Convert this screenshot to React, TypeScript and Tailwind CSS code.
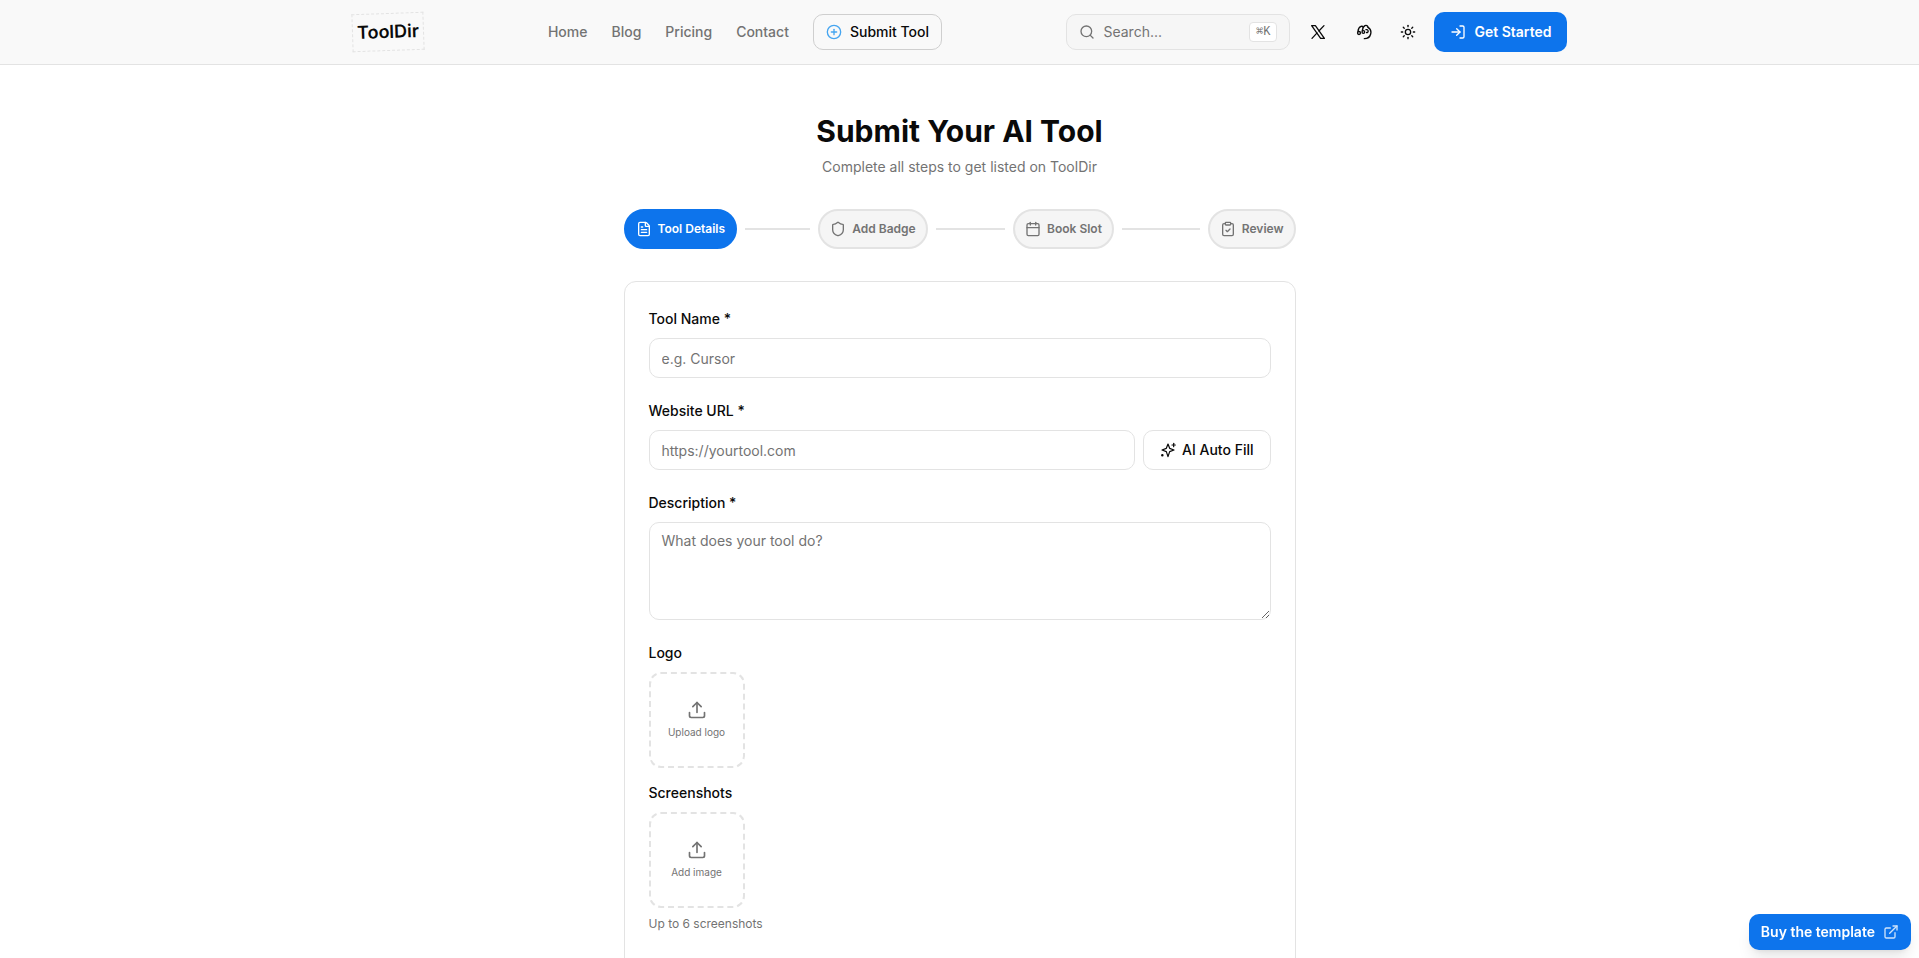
import type { ReactNode } from "react";
import {
  Calendar,
  CirclePlus,
  ClipboardCheck,
  ExternalLink,
  FileText,
  LogIn,
  Search,
  Shield,
  Sun,
  Upload,
} from "lucide-react";
import type { LucideIcon } from "lucide-react";

type Step = {
  label: string;
  icon: LucideIcon;
};

const navLinks = ["Home", "Blog", "Pricing", "Contact"];

const steps: Step[] = [
  { label: "Tool Details", icon: FileText },
  { label: "Add Badge", icon: Shield },
  { label: "Book Slot", icon: Calendar },
  { label: "Review", icon: ClipboardCheck },
];

const inputClass =
  "h-10 w-full min-w-0 rounded-[10px] border border-[#e3e3e3] bg-white px-3 py-1 text-sm text-[#0a0a0a] placeholder:text-[#737373]";

function XIcon() {
  return (
    <svg
      viewBox="0 0 24 24"
      className="size-[18px]"
      fill="none"
      stroke="currentColor"
      strokeWidth="1.7"
      strokeLinecap="round"
      strokeLinejoin="round"
      aria-hidden="true"
    >
      <path d="M3.5 3.5l12 17h5l-12-17z" />
      <path d="M4 20.500l6.800-7.300m2.400-2.500L20 3.500" />
    </svg>
  );
}

function PawIcon() {
  return (
    <svg
      viewBox="0 0 24 24"
      className="size-4"
      fill="none"
      stroke="currentColor"
      strokeWidth="2"
      strokeLinecap="round"
      strokeLinejoin="round"
      aria-hidden="true"
    >
      <circle cx="4.500" cy="13.500" r="2.200" />
      <circle cx="11" cy="12" r="2" />
      <path d="M3 11c.3-3.500 2-6.500 4.500-7.500 1.500-.5 2.500 0 3 1.200" />
      <path d="M9.500 10c.5-3.500 1.800-6.600 4-7.600 2-.8 4 .1 4.500 2.300" />
      <path d="M15 8.500c1.500-.5 3 .3 3.200 2 .1 1.500-1 2.500-2.400 2.300" />
      <path d="M18 5c3.500 2 5 6 4 10-1 4-4.500 7-9.500 7" />
    </svg>
  );
}

function SparklesIcon() {
  return (
    <svg
      viewBox="0 0 24 24"
      className="size-4"
      fill="none"
      stroke="currentColor"
      strokeWidth="1.8"
      strokeLinecap="round"
      strokeLinejoin="round"
      aria-hidden="true"
    >
      <path d="M12 3l2.500 6.500L21 12l-6.500 2.500L12 22l-2.500-7.500L3 12l6.500-2.500z" />
      <path d="M20.500 2v5" />
      <path d="M23 4.500h-5" />
      <circle cx="3.500" cy="20" r="1" fill="currentColor" />
    </svg>
  );
}

function Header() {
  return (
    <header className="border-b border-[#e3e3e3] bg-[#f9f9f9]">
      <div className="mx-auto flex h-16 max-w-7xl items-center justify-between px-8">
        <a
          href="#"
          className="-rotate-2 border border-dashed border-[#e3e3e3] px-1 py-1 text-lg font-semibold text-[#0a0a0a]"
        >
          ToolDir
        </a>

        <nav className="flex items-center gap-6 text-sm font-medium text-[#737373]">
          {navLinks.map((link) => (
            <a key={link} href="#">
              {link}
            </a>
          ))}
          <a
            href="#"
            className="flex h-9 items-center gap-2 rounded-[10px] border border-[#cfcfcf] px-3 text-[#0a0a0a]"
          >
            <CirclePlus className="size-4 text-[#45a5f0]" />
            Submit Tool
          </a>
        </nav>

        <div className="flex items-center gap-2">
          <button
            type="button"
            className="flex h-9 w-56 items-center gap-2 rounded-[10px] border border-[#e3e3e3] bg-[#f6f6f6] px-3 text-sm text-[#737373]"
          >
            <Search className="size-4" />
            Search...
            <kbd className="ml-auto flex h-5 items-center rounded border border-[#e3e3e3] bg-white px-1.5 font-mono text-xs">
              ⌘K
            </kbd>
          </button>
          <a href="#" aria-label="X" className="flex size-10 items-center justify-center text-[#0a0a0a]">
            <XIcon />
          </a>
          <a href="#" aria-label="Community" className="flex size-9 items-center justify-center text-[#0a0a0a]">
            <PawIcon />
          </a>
          <button
            type="button"
            aria-label="Toggle theme"
            className="flex size-9 items-center justify-center text-[#0a0a0a]"
          >
            <Sun className="size-4" />
          </button>
          <button
            type="button"
            className="flex h-10 items-center gap-2 rounded-[10px] bg-[#0d74ec] px-4 text-sm font-semibold text-white"
          >
            <LogIn className="size-4" />
            Get Started
          </button>
        </div>
      </div>
    </header>
  );
}

function Stepper({ current }: { current: number }) {
  return (
    <ol className="mt-8 flex items-center">
      {steps.map(({ label, icon: Icon }, index) => {
        const isLast = index === steps.length - 1;

        return (
          <li key={label} className={isLast ? "flex items-center" : "flex flex-1 items-center"}>
            <button
              type="button"
              className={
                index === current
                  ? "flex h-10 items-center gap-1.5 rounded-full border-2 border-[#0d74ec] bg-[#0d74ec] px-2.5 text-xs font-semibold text-white"
                  : "flex h-10 items-center gap-1.5 rounded-full border-2 border-[#e3e3e3] bg-[#f5f5f5] px-2.5 text-xs font-semibold text-[#737373]"
              }
            >
              <Icon className="size-4" />
              {label}
            </button>
            {!isLast && <span className="mx-2 h-0.5 flex-1 bg-[#e3e3e3]" />}
          </li>
        );
      })}
    </ol>
  );
}

function Field({ id, label, children }: { id: string; label: string; children: ReactNode }) {
  return (
    <div className="flex flex-col gap-2">
      <div className="h-6">
        <label htmlFor={id} className="text-sm font-medium text-[#0a0a0a]">
          {label}
        </label>
      </div>
      {children}
    </div>
  );
}

function UploadBox({ id, text }: { id: string; text: string }) {
  return (
    <button
      id={id}
      type="button"
      className="flex size-24 flex-col items-center justify-center gap-1 rounded-xl border-2 border-dashed border-[#e3e3e3] text-[10px]/4 text-[#737373]"
    >
      <Upload className="size-5" />
      {text}
    </button>
  );
}

export default function App() {
  return (
    <div className="min-h-screen bg-white font-[Inter,sans-serif]">
      <Header />

      <main className="mx-auto max-w-2xl py-12">
        <div className="text-center">
          <h1 className="text-3xl font-bold text-[#0a0a0a]">Submit Your AI Tool</h1>
          <p className="mt-2 text-sm text-[#737373]">
            Complete all steps to get listed on ToolDir
          </p>
        </div>

        <Stepper current={0} />

        <form className="mt-8 flex flex-col gap-5 rounded-xl border border-[#e3e3e3] p-6 pb-16">
          <Field id="name" label="Tool Name *">
            <input id="name" type="text" placeholder="e.g. Cursor" className={inputClass} />
          </Field>

          <Field id="url" label="Website URL *">
            <div className="flex gap-2">
              <input id="url" type="url" placeholder="https://yourtool.com" className={inputClass} />
              <button
                type="button"
                className="flex h-10 shrink-0 items-center gap-1.5 rounded-[10px] border border-[#e3e3e3] px-4 text-sm font-medium text-[#0a0a0a]"
              >
                <SparklesIcon />
                AI Auto Fill
              </button>
            </div>
          </Field>

          <Field id="description" label="Description *">
            <textarea
              id="description"
              rows={4}
              placeholder="What does your tool do?"
              className="block w-full resize-y rounded-[10px] border border-[#e3e3e3] px-3 py-2 text-sm text-[#0a0a0a] placeholder:text-[#737373]"
            />
          </Field>

          <div className="flex flex-col gap-3">
            <Field id="logo" label="Logo">
              <UploadBox id="logo" text="Upload logo" />
            </Field>
            <Field id="screenshots" label="Screenshots">
              <UploadBox id="screenshots" text="Add image" />
              <p className="text-xs text-[#737373]">Up to 6 screenshots</p>
            </Field>
          </div>
        </form>
      </main>

      <a
        href="#"
        className="fixed right-2 bottom-2 flex h-9 items-center gap-2 rounded-[10px] bg-[#0d74ec] px-3 text-sm font-semibold text-white shadow-lg"
      >
        Buy the template
        <ExternalLink className="size-4 opacity-80" />
      </a>
    </div>
  );
}
